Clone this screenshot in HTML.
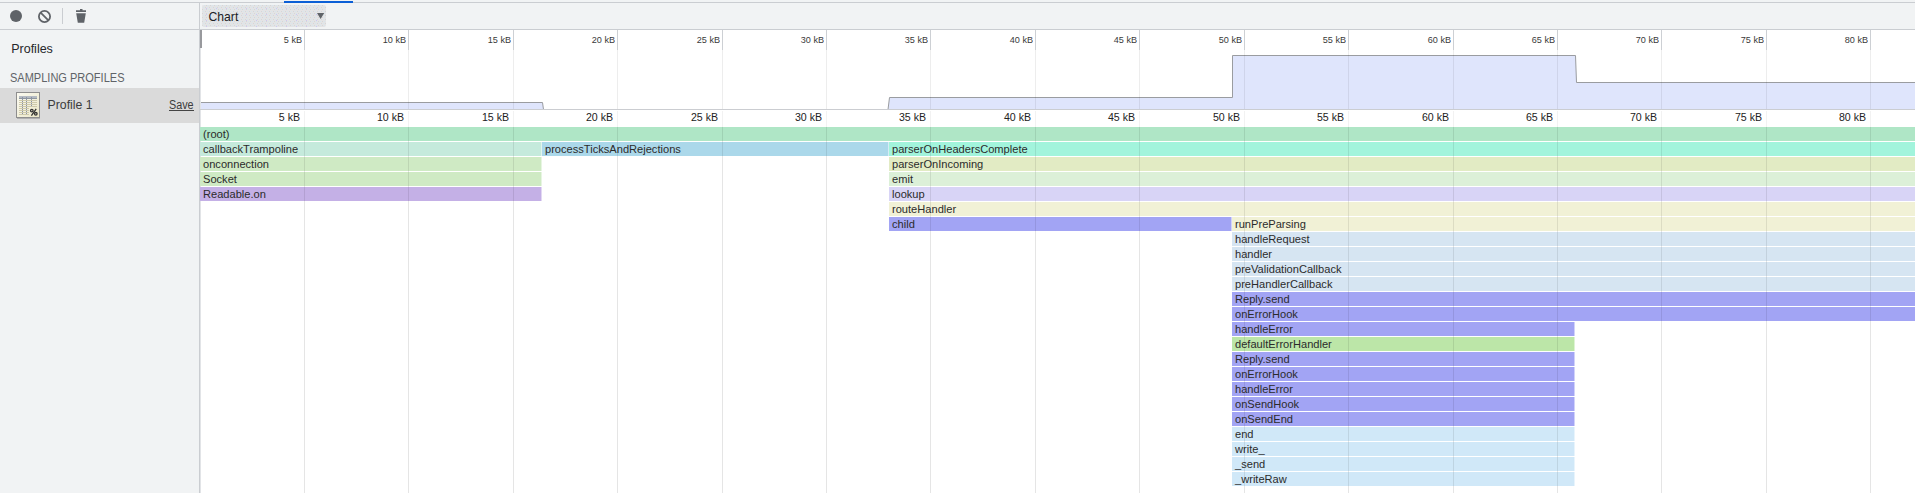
<!DOCTYPE html>
<html><head><meta charset="utf-8"><style>
*{margin:0;padding:0;box-sizing:border-box}
html,body{width:1915px;height:493px;overflow:hidden;background:#fff;font-family:"Liberation Sans",sans-serif;}
.a{position:absolute}
#tb{left:0;top:0;width:1915px;height:30px;background:#f1f3f4;border-bottom:1px solid #cacdd1}
#tbl{left:0;top:2px;width:1915px;height:1px;background:#cacdd1}
#side{left:0;top:30px;width:200px;height:463px;background:#f1f3f4;border-right:1px solid #cacdd1}
.gl{position:absolute;width:1px;background:rgba(0,0,0,0.09)}
.ol{position:absolute;font-size:9.4px;transform:scaleX(0.97);transform-origin:100% 0;color:#3a3a3a;text-align:right;width:60px;line-height:10px}
.fl{position:absolute;font-size:10.6px;color:#222;text-align:right;width:60px;line-height:12px}
.bar{position:absolute;height:14px;font-size:11.1px;line-height:14px;color:#2b2b2b;white-space:nowrap;overflow:hidden;padding-left:3px}
</style></head><body>
<div class="a" id="tb"></div>
<div class="a" id="tbl"></div>
<div class="a" style="left:284px;top:1px;width:69px;height:2px;background:#0b5fd6"></div>

<svg class="a" style="left:0;top:0" width="100" height="30">
<circle cx="16" cy="16" r="6" fill="#5f6368"/>
<circle cx="44.5" cy="16.5" r="5.6" fill="none" stroke="#5f6368" stroke-width="1.8"/>
<line x1="40.6" y1="12.6" x2="48.4" y2="20.4" stroke="#5f6368" stroke-width="1.8"/>
<rect x="62" y="8" width="1" height="16" fill="#cacdd1"/>
<path d="M76 10.2 H86 V12 H76 Z M80 9 H82.5 V10.5 H80 Z M76.2 13.2 H85.8 L84.2 22.8 H77.8 Z" fill="#5f6368"/>
</svg>
<div class="a" style="left:199px;top:2px;width:1px;height:28px;background:#cacdd1"></div>
<svg class="a" style="left:202px;top:5px" width="124" height="22"><defs><pattern id="dp" width="4" height="4" patternUnits="userSpaceOnUse"><rect width="4" height="4" fill="#e4e4e5"/><rect x="0" y="0" width="1" height="1" fill="#d5d6d8"/><rect x="2" y="0" width="1" height="1" fill="#d6e6ee"/><rect x="1" y="2" width="1" height="1" fill="#d6e6ee"/><rect x="3" y="2" width="1" height="1" fill="#d5d6d8"/></pattern><pattern id="dp2" width="10" height="6" patternUnits="userSpaceOnUse"><rect x="4" y="3" width="1" height="1" fill="#cfc6f4"/></pattern></defs><rect width="124" height="22" rx="2" fill="url(#dp)"/><rect width="124" height="22" rx="2" fill="url(#dp2)"/></svg>
<div class="a" style="left:208.5px;top:10px;font-size:12.2px;line-height:14px;color:#202124">Chart</div>
<svg class="a" style="left:316px;top:12px" width="10" height="8"><path d="M1 1 H8.2 L4.6 7 Z" fill="#5f6368"/></svg>

<div class="a" id="side"></div>
<div class="a" style="left:11.2px;top:42px;font-size:12.5px;line-height:14px;color:#26272a">Profiles</div>
<div class="a" style="left:10px;top:72px;font-size:12px;line-height:13px;color:#5f6368;transform:scaleX(0.918);transform-origin:0 0">SAMPLING PROFILES</div>
<div class="a" style="left:0;top:88px;width:199px;height:35px;background:#dadada"></div>
<svg class="a" style="left:16px;top:92px" width="26" height="28">
<defs><linearGradient id="ig" x1="0" y1="0" x2="1" y2="1"><stop offset="0" stop-color="#fbfaf2"/><stop offset="1" stop-color="#ebe7c6"/></linearGradient></defs>
<rect x="1" y="25" width="23" height="2" fill="#a0a0a0" opacity="0.7"/>
<rect x="0.5" y="0.5" width="23" height="25" fill="url(#ig)" stroke="#8e8e8e"/>
<rect x="3" y="4" width="18" height="2" fill="#b4bac2"/>
<rect x="3" y="6" width="18" height="1" fill="#8e969f"/>
<g stroke="#cdc9ab" stroke-width="1">
<line x1="3" y1="8.5" x2="21" y2="8.5"/><line x1="3" y1="10.5" x2="21" y2="10.5"/><line x1="3" y1="12.5" x2="21" y2="12.5"/><line x1="3" y1="14.5" x2="21" y2="14.5"/><line x1="3" y1="16.5" x2="13" y2="16.5"/><line x1="3" y1="18.5" x2="13" y2="18.5"/><line x1="3" y1="20.5" x2="13" y2="20.5"/><line x1="3" y1="22.5" x2="13" y2="22.5"/>
</g>
<g stroke="#8a92a8" stroke-width="1" stroke-dasharray="1 1">
<line x1="6.5" y1="5" x2="6.5" y2="23"/><line x1="10.5" y1="5" x2="10.5" y2="23"/><line x1="15.5" y1="5" x2="15.5" y2="15"/>
</g>
<g fill="none" stroke="#333" stroke-width="1.3"><circle cx="15.8" cy="18.6" r="1.3"/><circle cx="19.8" cy="21.8" r="1.3"/><line x1="20.2" y1="16.8" x2="15.4" y2="23.6"/></g>
</svg>
<div class="a" style="left:47.5px;top:98px;font-size:12.3px;line-height:14px;color:#3c3c3c">Profile 1</div>
<div class="a" style="left:169px;top:98px;font-size:12px;line-height:14px;color:#3c3c3c;transform:scaleX(0.9);transform-origin:0 0">Save</div>
<div class="a" style="left:169px;top:110px;width:25px;height:1px;background:#444"></div>


<svg class="a" style="left:0;top:0" width="1915" height="130">
<path d="M200.5 109.5 V102.5 H542.5 L543.5 109.5 Z" fill="#dfe5fc" stroke="none"/>
<path d="M888 109.5 L889.5 97.5 H1232.5 V55.5 H1575.5 L1576.5 82.5 H1915 V109.5 Z" fill="#dfe5fc"/>
<path d="M200.5 102.5 H542.5 L543.5 109.5" fill="none" stroke="#9a9ca0" stroke-width="1"/>
<path d="M888 109.5 L889.5 97.5 H1232.5 V55.5 H1575.5 L1576.5 82.5 H1915" fill="none" stroke="#9a9ca0" stroke-width="1"/>
</svg>
<div class="a" style="left:200px;top:30px;width:2px;height:18px;background:#98999d"></div>
<div class="a" style="left:200px;top:48px;width:1px;height:445px;background:#e2e4e7"></div>
<div class="a" style="left:200px;top:109px;width:1715px;height:1px;background:#cbcdd1"></div>
<div class="gl" style="left:304px;top:30px;height:20px;background:#cdd0d4"></div>
<div class="gl" style="left:304px;top:50px;height:59px;background:rgba(0,0,0,0.07)"></div>
<div class="gl" style="left:304px;top:111px;height:16px;background:rgba(0,0,0,0.05)"></div>
<div class="gl" style="left:304px;top:127px;height:366px;background:rgba(0,0,0,0.10)"></div>
<div class="ol" style="left:242px;top:35px">5 kB</div>
<div class="fl" style="left:240px;top:111px">5 kB</div>
<div class="gl" style="left:408px;top:30px;height:20px;background:#cdd0d4"></div>
<div class="gl" style="left:408px;top:50px;height:59px;background:rgba(0,0,0,0.07)"></div>
<div class="gl" style="left:408px;top:111px;height:16px;background:rgba(0,0,0,0.05)"></div>
<div class="gl" style="left:408px;top:127px;height:366px;background:rgba(0,0,0,0.10)"></div>
<div class="ol" style="left:346px;top:35px">10 kB</div>
<div class="fl" style="left:344px;top:111px">10 kB</div>
<div class="gl" style="left:513px;top:30px;height:20px;background:#cdd0d4"></div>
<div class="gl" style="left:513px;top:50px;height:59px;background:rgba(0,0,0,0.07)"></div>
<div class="gl" style="left:513px;top:111px;height:16px;background:rgba(0,0,0,0.05)"></div>
<div class="gl" style="left:513px;top:127px;height:366px;background:rgba(0,0,0,0.10)"></div>
<div class="ol" style="left:451px;top:35px">15 kB</div>
<div class="fl" style="left:449px;top:111px">15 kB</div>
<div class="gl" style="left:617px;top:30px;height:20px;background:#cdd0d4"></div>
<div class="gl" style="left:617px;top:50px;height:59px;background:rgba(0,0,0,0.07)"></div>
<div class="gl" style="left:617px;top:111px;height:16px;background:rgba(0,0,0,0.05)"></div>
<div class="gl" style="left:617px;top:127px;height:366px;background:rgba(0,0,0,0.10)"></div>
<div class="ol" style="left:555px;top:35px">20 kB</div>
<div class="fl" style="left:553px;top:111px">20 kB</div>
<div class="gl" style="left:722px;top:30px;height:20px;background:#cdd0d4"></div>
<div class="gl" style="left:722px;top:50px;height:59px;background:rgba(0,0,0,0.07)"></div>
<div class="gl" style="left:722px;top:111px;height:16px;background:rgba(0,0,0,0.05)"></div>
<div class="gl" style="left:722px;top:127px;height:366px;background:rgba(0,0,0,0.10)"></div>
<div class="ol" style="left:660px;top:35px">25 kB</div>
<div class="fl" style="left:658px;top:111px">25 kB</div>
<div class="gl" style="left:826px;top:30px;height:20px;background:#cdd0d4"></div>
<div class="gl" style="left:826px;top:50px;height:59px;background:rgba(0,0,0,0.07)"></div>
<div class="gl" style="left:826px;top:111px;height:16px;background:rgba(0,0,0,0.05)"></div>
<div class="gl" style="left:826px;top:127px;height:366px;background:rgba(0,0,0,0.10)"></div>
<div class="ol" style="left:764px;top:35px">30 kB</div>
<div class="fl" style="left:762px;top:111px">30 kB</div>
<div class="gl" style="left:930px;top:30px;height:20px;background:#cdd0d4"></div>
<div class="gl" style="left:930px;top:50px;height:59px;background:rgba(0,0,0,0.07)"></div>
<div class="gl" style="left:930px;top:111px;height:16px;background:rgba(0,0,0,0.05)"></div>
<div class="gl" style="left:930px;top:127px;height:366px;background:rgba(0,0,0,0.10)"></div>
<div class="ol" style="left:868px;top:35px">35 kB</div>
<div class="fl" style="left:866px;top:111px">35 kB</div>
<div class="gl" style="left:1035px;top:30px;height:20px;background:#cdd0d4"></div>
<div class="gl" style="left:1035px;top:50px;height:59px;background:rgba(0,0,0,0.07)"></div>
<div class="gl" style="left:1035px;top:111px;height:16px;background:rgba(0,0,0,0.05)"></div>
<div class="gl" style="left:1035px;top:127px;height:366px;background:rgba(0,0,0,0.10)"></div>
<div class="ol" style="left:973px;top:35px">40 kB</div>
<div class="fl" style="left:971px;top:111px">40 kB</div>
<div class="gl" style="left:1139px;top:30px;height:20px;background:#cdd0d4"></div>
<div class="gl" style="left:1139px;top:50px;height:59px;background:rgba(0,0,0,0.07)"></div>
<div class="gl" style="left:1139px;top:111px;height:16px;background:rgba(0,0,0,0.05)"></div>
<div class="gl" style="left:1139px;top:127px;height:366px;background:rgba(0,0,0,0.10)"></div>
<div class="ol" style="left:1077px;top:35px">45 kB</div>
<div class="fl" style="left:1075px;top:111px">45 kB</div>
<div class="gl" style="left:1244px;top:30px;height:20px;background:#cdd0d4"></div>
<div class="gl" style="left:1244px;top:50px;height:59px;background:rgba(0,0,0,0.07)"></div>
<div class="gl" style="left:1244px;top:111px;height:16px;background:rgba(0,0,0,0.05)"></div>
<div class="gl" style="left:1244px;top:127px;height:366px;background:rgba(0,0,0,0.10)"></div>
<div class="ol" style="left:1182px;top:35px">50 kB</div>
<div class="fl" style="left:1180px;top:111px">50 kB</div>
<div class="gl" style="left:1348px;top:30px;height:20px;background:#cdd0d4"></div>
<div class="gl" style="left:1348px;top:50px;height:59px;background:rgba(0,0,0,0.07)"></div>
<div class="gl" style="left:1348px;top:111px;height:16px;background:rgba(0,0,0,0.05)"></div>
<div class="gl" style="left:1348px;top:127px;height:366px;background:rgba(0,0,0,0.10)"></div>
<div class="ol" style="left:1286px;top:35px">55 kB</div>
<div class="fl" style="left:1284px;top:111px">55 kB</div>
<div class="gl" style="left:1453px;top:30px;height:20px;background:#cdd0d4"></div>
<div class="gl" style="left:1453px;top:50px;height:59px;background:rgba(0,0,0,0.07)"></div>
<div class="gl" style="left:1453px;top:111px;height:16px;background:rgba(0,0,0,0.05)"></div>
<div class="gl" style="left:1453px;top:127px;height:366px;background:rgba(0,0,0,0.10)"></div>
<div class="ol" style="left:1391px;top:35px">60 kB</div>
<div class="fl" style="left:1389px;top:111px">60 kB</div>
<div class="gl" style="left:1557px;top:30px;height:20px;background:#cdd0d4"></div>
<div class="gl" style="left:1557px;top:50px;height:59px;background:rgba(0,0,0,0.07)"></div>
<div class="gl" style="left:1557px;top:111px;height:16px;background:rgba(0,0,0,0.05)"></div>
<div class="gl" style="left:1557px;top:127px;height:366px;background:rgba(0,0,0,0.10)"></div>
<div class="ol" style="left:1495px;top:35px">65 kB</div>
<div class="fl" style="left:1493px;top:111px">65 kB</div>
<div class="gl" style="left:1661px;top:30px;height:20px;background:#cdd0d4"></div>
<div class="gl" style="left:1661px;top:50px;height:59px;background:rgba(0,0,0,0.07)"></div>
<div class="gl" style="left:1661px;top:111px;height:16px;background:rgba(0,0,0,0.05)"></div>
<div class="gl" style="left:1661px;top:127px;height:366px;background:rgba(0,0,0,0.10)"></div>
<div class="ol" style="left:1599px;top:35px">70 kB</div>
<div class="fl" style="left:1597px;top:111px">70 kB</div>
<div class="gl" style="left:1766px;top:30px;height:20px;background:#cdd0d4"></div>
<div class="gl" style="left:1766px;top:50px;height:59px;background:rgba(0,0,0,0.07)"></div>
<div class="gl" style="left:1766px;top:111px;height:16px;background:rgba(0,0,0,0.05)"></div>
<div class="gl" style="left:1766px;top:127px;height:366px;background:rgba(0,0,0,0.10)"></div>
<div class="ol" style="left:1704px;top:35px">75 kB</div>
<div class="fl" style="left:1702px;top:111px">75 kB</div>
<div class="gl" style="left:1870px;top:30px;height:20px;background:#cdd0d4"></div>
<div class="gl" style="left:1870px;top:50px;height:59px;background:rgba(0,0,0,0.07)"></div>
<div class="gl" style="left:1870px;top:111px;height:16px;background:rgba(0,0,0,0.05)"></div>
<div class="gl" style="left:1870px;top:127px;height:366px;background:rgba(0,0,0,0.10)"></div>
<div class="ol" style="left:1808px;top:35px">80 kB</div>
<div class="fl" style="left:1806px;top:111px">80 kB</div>
<div class="bar" style="left:200px;top:127px;width:1716px;background:#afe6c6">(root)</div>
<div class="bar" style="left:200px;top:142px;width:342px;background:#c5eadc">callbackTrampoline</div>
<div class="a" style="left:541px;top:142px;width:1px;height:14px;background:rgba(255,255,255,0.5)"></div>
<div class="bar" style="left:542px;top:142px;width:347px;background:#abd8ea">processTicksAndRejections</div>
<div class="a" style="left:888px;top:142px;width:1px;height:14px;background:rgba(255,255,255,0.5)"></div>
<div class="bar" style="left:889px;top:142px;width:1027px;background:#a2f4dc">parserOnHeadersComplete</div>
<div class="bar" style="left:200px;top:157px;width:342px;background:#cfeac4">onconnection</div>
<div class="a" style="left:541px;top:157px;width:1px;height:14px;background:rgba(255,255,255,0.5)"></div>
<div class="bar" style="left:889px;top:157px;width:1027px;background:#e2ebc4">parserOnIncoming</div>
<div class="bar" style="left:200px;top:172px;width:342px;background:#cfeac4">Socket</div>
<div class="a" style="left:541px;top:172px;width:1px;height:14px;background:rgba(255,255,255,0.5)"></div>
<div class="bar" style="left:889px;top:172px;width:1027px;background:#dcf0d8">emit</div>
<div class="bar" style="left:200px;top:187px;width:342px;background:#c4b0e6">Readable.on</div>
<div class="a" style="left:541px;top:187px;width:1px;height:14px;background:rgba(255,255,255,0.5)"></div>
<div class="bar" style="left:889px;top:187px;width:1027px;background:#d8d4f6">lookup</div>
<div class="bar" style="left:889px;top:202px;width:1027px;background:#f1f1d6">routeHandler</div>
<div class="bar" style="left:889px;top:217px;width:343px;background:#a2a4f4">child</div>
<div class="a" style="left:1231px;top:217px;width:1px;height:14px;background:rgba(255,255,255,0.5)"></div>
<div class="bar" style="left:1232px;top:217px;width:684px;background:#f1f1d6">runPreParsing</div>
<div class="bar" style="left:1232px;top:232px;width:684px;background:#d6e5f2">handleRequest</div>
<div class="bar" style="left:1232px;top:247px;width:684px;background:#d6e5f2">handler</div>
<div class="bar" style="left:1232px;top:262px;width:684px;background:#d6e5f2">preValidationCallback</div>
<div class="bar" style="left:1232px;top:277px;width:684px;background:#d6e5f2">preHandlerCallback</div>
<div class="bar" style="left:1232px;top:292px;width:684px;background:#a2a4f4">Reply.send</div>
<div class="bar" style="left:1232px;top:307px;width:684px;background:#a2a4f4">onErrorHook</div>
<div class="bar" style="left:1232px;top:322px;width:343px;background:#a2a4f4">handleError</div>
<div class="a" style="left:1574px;top:322px;width:1px;height:14px;background:rgba(255,255,255,0.5)"></div>
<div class="bar" style="left:1232px;top:337px;width:343px;background:#bce6a8">defaultErrorHandler</div>
<div class="a" style="left:1574px;top:337px;width:1px;height:14px;background:rgba(255,255,255,0.5)"></div>
<div class="bar" style="left:1232px;top:352px;width:343px;background:#a2a4f4">Reply.send</div>
<div class="a" style="left:1574px;top:352px;width:1px;height:14px;background:rgba(255,255,255,0.5)"></div>
<div class="bar" style="left:1232px;top:367px;width:343px;background:#a2a4f4">onErrorHook</div>
<div class="a" style="left:1574px;top:367px;width:1px;height:14px;background:rgba(255,255,255,0.5)"></div>
<div class="bar" style="left:1232px;top:382px;width:343px;background:#a2a4f4">handleError</div>
<div class="a" style="left:1574px;top:382px;width:1px;height:14px;background:rgba(255,255,255,0.5)"></div>
<div class="bar" style="left:1232px;top:397px;width:343px;background:#a2a4f4">onSendHook</div>
<div class="a" style="left:1574px;top:397px;width:1px;height:14px;background:rgba(255,255,255,0.5)"></div>
<div class="bar" style="left:1232px;top:412px;width:343px;background:#a2a4f4">onSendEnd</div>
<div class="a" style="left:1574px;top:412px;width:1px;height:14px;background:rgba(255,255,255,0.5)"></div>
<div class="bar" style="left:1232px;top:427px;width:343px;background:#d0e8f8">end</div>
<div class="a" style="left:1574px;top:427px;width:1px;height:14px;background:rgba(255,255,255,0.5)"></div>
<div class="bar" style="left:1232px;top:442px;width:343px;background:#d0e8f8">write_</div>
<div class="a" style="left:1574px;top:442px;width:1px;height:14px;background:rgba(255,255,255,0.5)"></div>
<div class="bar" style="left:1232px;top:457px;width:343px;background:#d0e8f8">_send</div>
<div class="a" style="left:1574px;top:457px;width:1px;height:14px;background:rgba(255,255,255,0.5)"></div>
<div class="bar" style="left:1232px;top:472px;width:343px;background:#d0e8f8">_writeRaw</div>
<div class="a" style="left:1574px;top:472px;width:1px;height:14px;background:rgba(255,255,255,0.5)"></div>
<div class="gl" style="left:304px;top:127px;height:14px;background:rgba(0,0,0,0.085)"></div>
<div class="gl" style="left:304px;top:142px;height:14px;background:rgba(0,0,0,0.085)"></div>
<div class="gl" style="left:304px;top:157px;height:14px;background:rgba(0,0,0,0.085)"></div>
<div class="gl" style="left:304px;top:172px;height:14px;background:rgba(0,0,0,0.085)"></div>
<div class="gl" style="left:304px;top:187px;height:14px;background:rgba(0,0,0,0.085)"></div>
<div class="gl" style="left:408px;top:127px;height:14px;background:rgba(0,0,0,0.085)"></div>
<div class="gl" style="left:408px;top:142px;height:14px;background:rgba(0,0,0,0.085)"></div>
<div class="gl" style="left:408px;top:157px;height:14px;background:rgba(0,0,0,0.085)"></div>
<div class="gl" style="left:408px;top:172px;height:14px;background:rgba(0,0,0,0.085)"></div>
<div class="gl" style="left:408px;top:187px;height:14px;background:rgba(0,0,0,0.085)"></div>
<div class="gl" style="left:513px;top:127px;height:14px;background:rgba(0,0,0,0.085)"></div>
<div class="gl" style="left:513px;top:142px;height:14px;background:rgba(0,0,0,0.085)"></div>
<div class="gl" style="left:513px;top:157px;height:14px;background:rgba(0,0,0,0.085)"></div>
<div class="gl" style="left:513px;top:172px;height:14px;background:rgba(0,0,0,0.085)"></div>
<div class="gl" style="left:513px;top:187px;height:14px;background:rgba(0,0,0,0.085)"></div>
<div class="gl" style="left:617px;top:127px;height:14px;background:rgba(0,0,0,0.085)"></div>
<div class="gl" style="left:617px;top:142px;height:14px;background:rgba(0,0,0,0.085)"></div>
<div class="gl" style="left:722px;top:127px;height:14px;background:rgba(0,0,0,0.085)"></div>
<div class="gl" style="left:722px;top:142px;height:14px;background:rgba(0,0,0,0.085)"></div>
<div class="gl" style="left:826px;top:127px;height:14px;background:rgba(0,0,0,0.085)"></div>
<div class="gl" style="left:826px;top:142px;height:14px;background:rgba(0,0,0,0.085)"></div>
<div class="gl" style="left:930px;top:127px;height:14px;background:rgba(0,0,0,0.085)"></div>
<div class="gl" style="left:930px;top:142px;height:14px;background:rgba(0,0,0,0.085)"></div>
<div class="gl" style="left:930px;top:157px;height:14px;background:rgba(0,0,0,0.085)"></div>
<div class="gl" style="left:930px;top:172px;height:14px;background:rgba(0,0,0,0.085)"></div>
<div class="gl" style="left:930px;top:187px;height:14px;background:rgba(0,0,0,0.085)"></div>
<div class="gl" style="left:930px;top:202px;height:14px;background:rgba(0,0,0,0.085)"></div>
<div class="gl" style="left:930px;top:217px;height:14px;background:rgba(0,0,0,0.085)"></div>
<div class="gl" style="left:1035px;top:127px;height:14px;background:rgba(0,0,0,0.085)"></div>
<div class="gl" style="left:1035px;top:142px;height:14px;background:rgba(0,0,0,0.085)"></div>
<div class="gl" style="left:1035px;top:157px;height:14px;background:rgba(0,0,0,0.085)"></div>
<div class="gl" style="left:1035px;top:172px;height:14px;background:rgba(0,0,0,0.085)"></div>
<div class="gl" style="left:1035px;top:187px;height:14px;background:rgba(0,0,0,0.085)"></div>
<div class="gl" style="left:1035px;top:202px;height:14px;background:rgba(0,0,0,0.085)"></div>
<div class="gl" style="left:1035px;top:217px;height:14px;background:rgba(0,0,0,0.085)"></div>
<div class="gl" style="left:1139px;top:127px;height:14px;background:rgba(0,0,0,0.085)"></div>
<div class="gl" style="left:1139px;top:142px;height:14px;background:rgba(0,0,0,0.085)"></div>
<div class="gl" style="left:1139px;top:157px;height:14px;background:rgba(0,0,0,0.085)"></div>
<div class="gl" style="left:1139px;top:172px;height:14px;background:rgba(0,0,0,0.085)"></div>
<div class="gl" style="left:1139px;top:187px;height:14px;background:rgba(0,0,0,0.085)"></div>
<div class="gl" style="left:1139px;top:202px;height:14px;background:rgba(0,0,0,0.085)"></div>
<div class="gl" style="left:1139px;top:217px;height:14px;background:rgba(0,0,0,0.085)"></div>
<div class="gl" style="left:1244px;top:127px;height:14px;background:rgba(0,0,0,0.085)"></div>
<div class="gl" style="left:1244px;top:142px;height:14px;background:rgba(0,0,0,0.085)"></div>
<div class="gl" style="left:1244px;top:157px;height:14px;background:rgba(0,0,0,0.085)"></div>
<div class="gl" style="left:1244px;top:172px;height:14px;background:rgba(0,0,0,0.085)"></div>
<div class="gl" style="left:1244px;top:187px;height:14px;background:rgba(0,0,0,0.085)"></div>
<div class="gl" style="left:1244px;top:202px;height:14px;background:rgba(0,0,0,0.085)"></div>
<div class="gl" style="left:1244px;top:217px;height:14px;background:rgba(0,0,0,0.085)"></div>
<div class="gl" style="left:1244px;top:232px;height:14px;background:rgba(0,0,0,0.085)"></div>
<div class="gl" style="left:1244px;top:247px;height:14px;background:rgba(0,0,0,0.085)"></div>
<div class="gl" style="left:1244px;top:262px;height:14px;background:rgba(0,0,0,0.085)"></div>
<div class="gl" style="left:1244px;top:277px;height:14px;background:rgba(0,0,0,0.085)"></div>
<div class="gl" style="left:1244px;top:292px;height:14px;background:rgba(0,0,0,0.085)"></div>
<div class="gl" style="left:1244px;top:307px;height:14px;background:rgba(0,0,0,0.085)"></div>
<div class="gl" style="left:1244px;top:322px;height:14px;background:rgba(0,0,0,0.085)"></div>
<div class="gl" style="left:1244px;top:337px;height:14px;background:rgba(0,0,0,0.085)"></div>
<div class="gl" style="left:1244px;top:352px;height:14px;background:rgba(0,0,0,0.085)"></div>
<div class="gl" style="left:1244px;top:367px;height:14px;background:rgba(0,0,0,0.085)"></div>
<div class="gl" style="left:1244px;top:382px;height:14px;background:rgba(0,0,0,0.085)"></div>
<div class="gl" style="left:1244px;top:397px;height:14px;background:rgba(0,0,0,0.085)"></div>
<div class="gl" style="left:1244px;top:412px;height:14px;background:rgba(0,0,0,0.085)"></div>
<div class="gl" style="left:1244px;top:427px;height:14px;background:rgba(0,0,0,0.085)"></div>
<div class="gl" style="left:1244px;top:442px;height:14px;background:rgba(0,0,0,0.085)"></div>
<div class="gl" style="left:1244px;top:457px;height:14px;background:rgba(0,0,0,0.085)"></div>
<div class="gl" style="left:1244px;top:472px;height:14px;background:rgba(0,0,0,0.085)"></div>
<div class="gl" style="left:1348px;top:127px;height:14px;background:rgba(0,0,0,0.085)"></div>
<div class="gl" style="left:1348px;top:142px;height:14px;background:rgba(0,0,0,0.085)"></div>
<div class="gl" style="left:1348px;top:157px;height:14px;background:rgba(0,0,0,0.085)"></div>
<div class="gl" style="left:1348px;top:172px;height:14px;background:rgba(0,0,0,0.085)"></div>
<div class="gl" style="left:1348px;top:187px;height:14px;background:rgba(0,0,0,0.085)"></div>
<div class="gl" style="left:1348px;top:202px;height:14px;background:rgba(0,0,0,0.085)"></div>
<div class="gl" style="left:1348px;top:217px;height:14px;background:rgba(0,0,0,0.085)"></div>
<div class="gl" style="left:1348px;top:232px;height:14px;background:rgba(0,0,0,0.085)"></div>
<div class="gl" style="left:1348px;top:247px;height:14px;background:rgba(0,0,0,0.085)"></div>
<div class="gl" style="left:1348px;top:262px;height:14px;background:rgba(0,0,0,0.085)"></div>
<div class="gl" style="left:1348px;top:277px;height:14px;background:rgba(0,0,0,0.085)"></div>
<div class="gl" style="left:1348px;top:292px;height:14px;background:rgba(0,0,0,0.085)"></div>
<div class="gl" style="left:1348px;top:307px;height:14px;background:rgba(0,0,0,0.085)"></div>
<div class="gl" style="left:1348px;top:322px;height:14px;background:rgba(0,0,0,0.085)"></div>
<div class="gl" style="left:1348px;top:337px;height:14px;background:rgba(0,0,0,0.085)"></div>
<div class="gl" style="left:1348px;top:352px;height:14px;background:rgba(0,0,0,0.085)"></div>
<div class="gl" style="left:1348px;top:367px;height:14px;background:rgba(0,0,0,0.085)"></div>
<div class="gl" style="left:1348px;top:382px;height:14px;background:rgba(0,0,0,0.085)"></div>
<div class="gl" style="left:1348px;top:397px;height:14px;background:rgba(0,0,0,0.085)"></div>
<div class="gl" style="left:1348px;top:412px;height:14px;background:rgba(0,0,0,0.085)"></div>
<div class="gl" style="left:1348px;top:427px;height:14px;background:rgba(0,0,0,0.085)"></div>
<div class="gl" style="left:1348px;top:442px;height:14px;background:rgba(0,0,0,0.085)"></div>
<div class="gl" style="left:1348px;top:457px;height:14px;background:rgba(0,0,0,0.085)"></div>
<div class="gl" style="left:1348px;top:472px;height:14px;background:rgba(0,0,0,0.085)"></div>
<div class="gl" style="left:1453px;top:127px;height:14px;background:rgba(0,0,0,0.085)"></div>
<div class="gl" style="left:1453px;top:142px;height:14px;background:rgba(0,0,0,0.085)"></div>
<div class="gl" style="left:1453px;top:157px;height:14px;background:rgba(0,0,0,0.085)"></div>
<div class="gl" style="left:1453px;top:172px;height:14px;background:rgba(0,0,0,0.085)"></div>
<div class="gl" style="left:1453px;top:187px;height:14px;background:rgba(0,0,0,0.085)"></div>
<div class="gl" style="left:1453px;top:202px;height:14px;background:rgba(0,0,0,0.085)"></div>
<div class="gl" style="left:1453px;top:217px;height:14px;background:rgba(0,0,0,0.085)"></div>
<div class="gl" style="left:1453px;top:232px;height:14px;background:rgba(0,0,0,0.085)"></div>
<div class="gl" style="left:1453px;top:247px;height:14px;background:rgba(0,0,0,0.085)"></div>
<div class="gl" style="left:1453px;top:262px;height:14px;background:rgba(0,0,0,0.085)"></div>
<div class="gl" style="left:1453px;top:277px;height:14px;background:rgba(0,0,0,0.085)"></div>
<div class="gl" style="left:1453px;top:292px;height:14px;background:rgba(0,0,0,0.085)"></div>
<div class="gl" style="left:1453px;top:307px;height:14px;background:rgba(0,0,0,0.085)"></div>
<div class="gl" style="left:1453px;top:322px;height:14px;background:rgba(0,0,0,0.085)"></div>
<div class="gl" style="left:1453px;top:337px;height:14px;background:rgba(0,0,0,0.085)"></div>
<div class="gl" style="left:1453px;top:352px;height:14px;background:rgba(0,0,0,0.085)"></div>
<div class="gl" style="left:1453px;top:367px;height:14px;background:rgba(0,0,0,0.085)"></div>
<div class="gl" style="left:1453px;top:382px;height:14px;background:rgba(0,0,0,0.085)"></div>
<div class="gl" style="left:1453px;top:397px;height:14px;background:rgba(0,0,0,0.085)"></div>
<div class="gl" style="left:1453px;top:412px;height:14px;background:rgba(0,0,0,0.085)"></div>
<div class="gl" style="left:1453px;top:427px;height:14px;background:rgba(0,0,0,0.085)"></div>
<div class="gl" style="left:1453px;top:442px;height:14px;background:rgba(0,0,0,0.085)"></div>
<div class="gl" style="left:1453px;top:457px;height:14px;background:rgba(0,0,0,0.085)"></div>
<div class="gl" style="left:1453px;top:472px;height:14px;background:rgba(0,0,0,0.085)"></div>
<div class="gl" style="left:1557px;top:127px;height:14px;background:rgba(0,0,0,0.085)"></div>
<div class="gl" style="left:1557px;top:142px;height:14px;background:rgba(0,0,0,0.085)"></div>
<div class="gl" style="left:1557px;top:157px;height:14px;background:rgba(0,0,0,0.085)"></div>
<div class="gl" style="left:1557px;top:172px;height:14px;background:rgba(0,0,0,0.085)"></div>
<div class="gl" style="left:1557px;top:187px;height:14px;background:rgba(0,0,0,0.085)"></div>
<div class="gl" style="left:1557px;top:202px;height:14px;background:rgba(0,0,0,0.085)"></div>
<div class="gl" style="left:1557px;top:217px;height:14px;background:rgba(0,0,0,0.085)"></div>
<div class="gl" style="left:1557px;top:232px;height:14px;background:rgba(0,0,0,0.085)"></div>
<div class="gl" style="left:1557px;top:247px;height:14px;background:rgba(0,0,0,0.085)"></div>
<div class="gl" style="left:1557px;top:262px;height:14px;background:rgba(0,0,0,0.085)"></div>
<div class="gl" style="left:1557px;top:277px;height:14px;background:rgba(0,0,0,0.085)"></div>
<div class="gl" style="left:1557px;top:292px;height:14px;background:rgba(0,0,0,0.085)"></div>
<div class="gl" style="left:1557px;top:307px;height:14px;background:rgba(0,0,0,0.085)"></div>
<div class="gl" style="left:1557px;top:322px;height:14px;background:rgba(0,0,0,0.085)"></div>
<div class="gl" style="left:1557px;top:337px;height:14px;background:rgba(0,0,0,0.085)"></div>
<div class="gl" style="left:1557px;top:352px;height:14px;background:rgba(0,0,0,0.085)"></div>
<div class="gl" style="left:1557px;top:367px;height:14px;background:rgba(0,0,0,0.085)"></div>
<div class="gl" style="left:1557px;top:382px;height:14px;background:rgba(0,0,0,0.085)"></div>
<div class="gl" style="left:1557px;top:397px;height:14px;background:rgba(0,0,0,0.085)"></div>
<div class="gl" style="left:1557px;top:412px;height:14px;background:rgba(0,0,0,0.085)"></div>
<div class="gl" style="left:1557px;top:427px;height:14px;background:rgba(0,0,0,0.085)"></div>
<div class="gl" style="left:1557px;top:442px;height:14px;background:rgba(0,0,0,0.085)"></div>
<div class="gl" style="left:1557px;top:457px;height:14px;background:rgba(0,0,0,0.085)"></div>
<div class="gl" style="left:1557px;top:472px;height:14px;background:rgba(0,0,0,0.085)"></div>
<div class="gl" style="left:1661px;top:127px;height:14px;background:rgba(0,0,0,0.085)"></div>
<div class="gl" style="left:1661px;top:142px;height:14px;background:rgba(0,0,0,0.085)"></div>
<div class="gl" style="left:1661px;top:157px;height:14px;background:rgba(0,0,0,0.085)"></div>
<div class="gl" style="left:1661px;top:172px;height:14px;background:rgba(0,0,0,0.085)"></div>
<div class="gl" style="left:1661px;top:187px;height:14px;background:rgba(0,0,0,0.085)"></div>
<div class="gl" style="left:1661px;top:202px;height:14px;background:rgba(0,0,0,0.085)"></div>
<div class="gl" style="left:1661px;top:217px;height:14px;background:rgba(0,0,0,0.085)"></div>
<div class="gl" style="left:1661px;top:232px;height:14px;background:rgba(0,0,0,0.085)"></div>
<div class="gl" style="left:1661px;top:247px;height:14px;background:rgba(0,0,0,0.085)"></div>
<div class="gl" style="left:1661px;top:262px;height:14px;background:rgba(0,0,0,0.085)"></div>
<div class="gl" style="left:1661px;top:277px;height:14px;background:rgba(0,0,0,0.085)"></div>
<div class="gl" style="left:1661px;top:292px;height:14px;background:rgba(0,0,0,0.085)"></div>
<div class="gl" style="left:1661px;top:307px;height:14px;background:rgba(0,0,0,0.085)"></div>
<div class="gl" style="left:1766px;top:127px;height:14px;background:rgba(0,0,0,0.085)"></div>
<div class="gl" style="left:1766px;top:142px;height:14px;background:rgba(0,0,0,0.085)"></div>
<div class="gl" style="left:1766px;top:157px;height:14px;background:rgba(0,0,0,0.085)"></div>
<div class="gl" style="left:1766px;top:172px;height:14px;background:rgba(0,0,0,0.085)"></div>
<div class="gl" style="left:1766px;top:187px;height:14px;background:rgba(0,0,0,0.085)"></div>
<div class="gl" style="left:1766px;top:202px;height:14px;background:rgba(0,0,0,0.085)"></div>
<div class="gl" style="left:1766px;top:217px;height:14px;background:rgba(0,0,0,0.085)"></div>
<div class="gl" style="left:1766px;top:232px;height:14px;background:rgba(0,0,0,0.085)"></div>
<div class="gl" style="left:1766px;top:247px;height:14px;background:rgba(0,0,0,0.085)"></div>
<div class="gl" style="left:1766px;top:262px;height:14px;background:rgba(0,0,0,0.085)"></div>
<div class="gl" style="left:1766px;top:277px;height:14px;background:rgba(0,0,0,0.085)"></div>
<div class="gl" style="left:1766px;top:292px;height:14px;background:rgba(0,0,0,0.085)"></div>
<div class="gl" style="left:1766px;top:307px;height:14px;background:rgba(0,0,0,0.085)"></div>
<div class="gl" style="left:1870px;top:127px;height:14px;background:rgba(0,0,0,0.085)"></div>
<div class="gl" style="left:1870px;top:142px;height:14px;background:rgba(0,0,0,0.085)"></div>
<div class="gl" style="left:1870px;top:157px;height:14px;background:rgba(0,0,0,0.085)"></div>
<div class="gl" style="left:1870px;top:172px;height:14px;background:rgba(0,0,0,0.085)"></div>
<div class="gl" style="left:1870px;top:187px;height:14px;background:rgba(0,0,0,0.085)"></div>
<div class="gl" style="left:1870px;top:202px;height:14px;background:rgba(0,0,0,0.085)"></div>
<div class="gl" style="left:1870px;top:217px;height:14px;background:rgba(0,0,0,0.085)"></div>
<div class="gl" style="left:1870px;top:232px;height:14px;background:rgba(0,0,0,0.085)"></div>
<div class="gl" style="left:1870px;top:247px;height:14px;background:rgba(0,0,0,0.085)"></div>
<div class="gl" style="left:1870px;top:262px;height:14px;background:rgba(0,0,0,0.085)"></div>
<div class="gl" style="left:1870px;top:277px;height:14px;background:rgba(0,0,0,0.085)"></div>
<div class="gl" style="left:1870px;top:292px;height:14px;background:rgba(0,0,0,0.085)"></div>
<div class="gl" style="left:1870px;top:307px;height:14px;background:rgba(0,0,0,0.085)"></div>
</body></html>
